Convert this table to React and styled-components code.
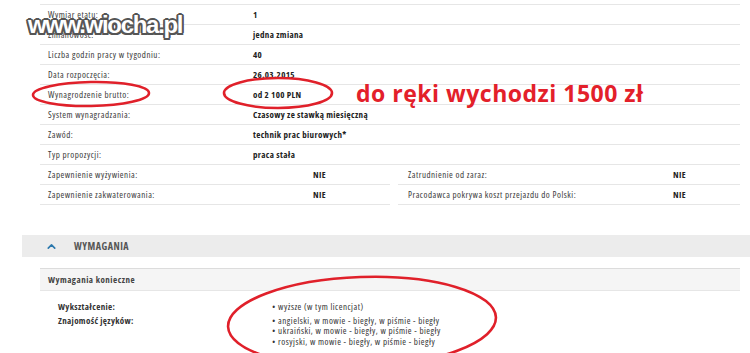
import styled, { createGlobalStyle } from 'styled-components';
import { ChevronUp } from 'lucide-react';

const GlobalStyle = createGlobalStyle`
  html, body {
    margin: 0;
    padding: 0;
    background: #fff;
  }
  body {
    font-family: "Open Sans", sans-serif;
    font-stretch: 75%;
    letter-spacing: 0.5px;
    color: #333;
  }
`;

const Page = styled.div`
  position: relative;
  width: 750px;
  height: 353px;
  overflow: hidden;
  padding-top: 4px;
  box-sizing: border-box;
`;

const Table = styled.div`
  margin-left: 40px;
  width: 700px;
  border-top: 1px solid #e6e6e6;
`;

const Row = styled.div`
  display: grid;
  grid-template-columns: 205px 1fr;
  align-items: center;
  height: 19px;
  padding-left: 8px;
  border-bottom: 1px solid #e6e6e6;
  font-size: 9px;
`;

const SplitRow = styled.div`
  display: grid;
  grid-template-columns: 350px 342px;
  gap: 8px;
`;

const Half = styled.div`
  display: grid;
  grid-template-columns: ${({ $value }) => $value}px 1fr;
  align-items: center;
  height: 19px;
  padding-left: ${({ $pad }) => $pad}px;
  border-bottom: 1px solid #e6e6e6;
  font-size: 9px;
`;

const Label = styled.span`
  color: #3a3a3a;
`;

const Value = styled.span`
  font-weight: 700;
  color: #222;
  letter-spacing: 0.35px;
`;

const Band = styled.div`
  display: flex;
  align-items: center;
  gap: 16px;
  margin: 30px 0 0 22px;
  height: 22px;
  padding-left: 23px;
  background: #ececec;
  font-size: 10px;
  font-weight: 700;
  color: #555;
  letter-spacing: 0.5px;
`;

const SubHeader = styled.div`
  display: flex;
  align-items: center;
  margin: 11px 0 0 40px;
  width: 692px;
  height: 21px;
  padding-left: 8px;
  background: #f5f5f5;
  border-top: 1px solid #dcdcdc;
  border-bottom: 1px solid #e6e6e6;
  font-size: 9px;
  font-weight: 700;
  color: #444;
`;

const Reqs = styled.div`
  display: grid;
  grid-template-columns: 214px 1fr;
  row-gap: 3px;
  margin: 11px 0 0 58px;
  font-size: 9px;
  line-height: 10.5px;
`;

const ReqLabel = styled.span`
  font-weight: 700;
  color: #333;
  letter-spacing: 0.35px;
`;

const Bullets = styled.ul`
  margin: 0;
  padding: 0;
  list-style: none;

  li::before {
    content: "• ";
  }
`;

const Watermark = styled.div`
  position: absolute;
  left: 28px;
  top: 13px;
  font-family: "Liberation Sans", sans-serif;
  font-stretch: normal;
  font-weight: 700;
  font-size: 24px;
  line-height: 24px;
  letter-spacing: -1.3px;
  color: #fff;
  text-shadow:
    -2px 0 #555, 2px 0 #555, 0 -2px #555, 0 2px #555,
    -1.5px -1.5px #555, 1.5px -1.5px #555, -1.5px 1.5px #555, 1.5px 1.5px #555;
`;

const Remark = styled.div`
  position: absolute;
  left: 356px;
  top: 77px;
  font-family: "Open Sans", sans-serif;
  font-stretch: normal;
  font-weight: 700;
  font-size: 23px;
  color: #e3202a;
  letter-spacing: 0.5px;
`;

const Marks = styled.svg`
  position: absolute;
  left: 0;
  top: 0;
  pointer-events: none;
`;

const details = [
  ['Wymiar etatu:', '1'],
  ['Zmianowość:', 'jedna zmiana'],
  ['Liczba godzin pracy w tygodniu:', '40'],
  ['Data rozpoczęcia:', '26.03.2015'],
  ['Wynagrodzenie brutto:', 'od 2 100 PLN'],
  ['System wynagradzania:', 'Czasowy ze stawką miesięczną'],
  ['Zawód:', 'technik prac biurowych*'],
  ['Typ propozycji:', 'praca stała'],
];

const pairs = [
  ['Zapewnienie wyżywienia:', 'NIE', 'Zatrudnienie od zaraz:', 'NIE'],
  ['Zapewnienie zakwaterowania:', 'NIE', 'Pracodawca pokrywa koszt przejazdu do Polski:', 'NIE'],
];

export default function App() {
  return (
    <Page>
      <GlobalStyle />
      <Table>
        {details.map(([label, value]) => (
          <Row key={label}>
            <Label>{label}</Label>
            <Value>{value}</Value>
          </Row>
        ))}
        {pairs.map(([l1, v1, l2, v2]) => (
          <SplitRow key={l1}>
            <Half $pad={8} $value={265}>
              <Label>{l1}</Label>
              <Value>{v1}</Value>
            </Half>
            <Half $pad={10} $value={265}>
              <Label>{l2}</Label>
              <Value>{v2}</Value>
            </Half>
          </SplitRow>
        ))}
      </Table>

      <Band>
        <ChevronUp size={13} strokeWidth={3} color="#2b78ad" />
        WYMAGANIA
      </Band>
      <SubHeader>Wymagania konieczne</SubHeader>
      <Reqs>
        <ReqLabel>Wykształcenie:</ReqLabel>
        <Bullets>
          <li>wyższe (w tym licencjat)</li>
        </Bullets>
        <ReqLabel>Znajomość języków:</ReqLabel>
        <Bullets>
          <li>angielski, w mowie - biegły, w piśmie - biegły</li>
          <li>ukraiński, w mowie - biegły, w piśmie - biegły</li>
          <li>rosyjski, w mowie - biegły, w piśmie - biegły</li>
        </Bullets>
      </Reqs>

      <Remark>do ręki wychodzi 1500 zł</Remark>
      <Marks width="750" height="353" viewBox="0 0 750 353">
        <g fill="none" stroke="#e0202a" strokeWidth="2.6">
          <ellipse cx="91" cy="94" rx="58" ry="12" transform="rotate(-1 91 94)" />
          <ellipse cx="278" cy="93" rx="54" ry="15" />
          <ellipse cx="362" cy="322" rx="134" ry="45" transform="rotate(-2 362 322)" />
        </g>
      </Marks>
      <Watermark>www.wiocha.pl</Watermark>
    </Page>
  );
}
